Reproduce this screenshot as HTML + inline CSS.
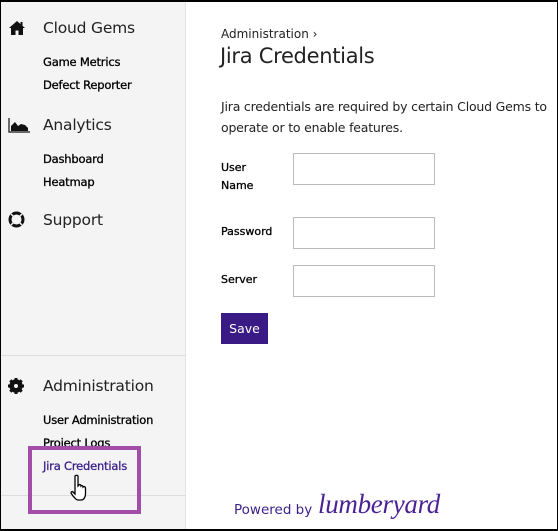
<!DOCTYPE html>
<html><head><style>
*{margin:0;padding:0;box-sizing:border-box}
body{width:558px;height:531px;position:relative;font-family:"DejaVu Sans","Liberation Sans",sans-serif;background:#fff;overflow:hidden}
.frame{position:absolute;left:0;top:0;width:558px;height:531px;border:1px solid #000;border-top-width:2px;border-bottom-width:2px;pointer-events:none;z-index:9}
.side{position:absolute;left:1px;top:0;width:185px;height:531px;background:#f4f4f4;border-right:1px solid #e4e4e4}
.h{position:absolute;left:43px;font-size:15.5px;color:#222;letter-spacing:-0.2px}
.l{position:absolute;left:43px;font-size:11.5px;color:#000;letter-spacing:-0.2px;-webkit-text-stroke:0.3px #000}
.ic{position:absolute;left:8px}
.hr{position:absolute;left:1px;width:185px;height:1px;background:#ddd}
.t{position:absolute;color:#222}
input{position:absolute;left:293px;width:142px;height:32px;border:1px solid #bbb;background:#fff}
.lab{position:absolute;left:221px;font-size:11px;color:#000;line-height:18px;-webkit-text-stroke:0.3px #000}
</style></head><body>
<div class="side"></div>
<svg class="ic" style="top:20px" width="18" height="15" viewBox="0 0 18 15"><path d="M9 1L1 8h2v7h4.5v-4.5h3V15H15V8h2z" fill="#111"/><rect x="12.5" y="2" width="2" height="4" fill="#111"/></svg>
<div class="h" style="top:19px">Cloud Gems</div>
<div class="l" style="top:55px">Game Metrics</div>
<div class="l" style="top:78px">Defect Reporter</div>
<svg class="ic" style="top:117px" width="22" height="16" viewBox="0 0 22 16"><path d="M1 1v14h21" stroke="#111" stroke-width="1.2" fill="none"/><path d="M3 14V9l4-4 3 4 3-2 4 1 3 3v3z" fill="#111"/></svg>
<div class="h" style="top:116px">Analytics</div>
<div class="l" style="top:152px">Dashboard</div>
<div class="l" style="top:175px">Heatmap</div>
<svg class="ic" style="top:211px" width="17" height="17" viewBox="0 0 17 17"><circle cx="8.5" cy="8.5" r="6.5" stroke="#111" stroke-width="3" fill="none"/><path d="M3 3l3 3M14 3l-3 3M3 14l3-3M14 14l-3-3" stroke="#f4f4f4" stroke-width="1.5"/></svg>
<div class="h" style="top:211px">Support</div>
<div class="hr" style="top:355px"></div>
<svg class="ic" style="top:378px" width="16" height="16" viewBox="0 0 16 16"><circle cx="8" cy="8" r="5" fill="none" stroke="#111" stroke-width="3.4"/><g stroke="#111" stroke-width="3"><path d="M8 0v16M0 8h16M2.3 2.3l11.4 11.4M13.7 2.3L2.3 13.7"/></g><circle cx="8" cy="8" r="2" fill="#f4f4f4"/></svg>
<div class="h" style="top:377px">Administration</div>
<div class="l" style="top:413px">User Administration</div>
<div class="l" style="top:436px">Project Logs</div>
<div class="l" style="top:459px;color:#3b1f8a;-webkit-text-stroke:0.3px #3b1f8a">Jira Credentials</div>
<div class="hr" style="top:495px"></div>
<div style="position:absolute;left:28px;top:446px;width:113px;height:68px;border:4px solid #a24ea8"></div>
<svg style="position:absolute;left:70px;top:474px" width="24" height="28" viewBox="0 0 24 28"><path d="M5 2c1-1 2.5-1 3 0v10l1-1c1-1 2 0 2 1 1-1 2 0 2 1 1-1 2.5 0 2.5 1v6c0 3-2 6-4 6H8c-2 0-3-2-5-4l-2-3c0-1 1-2 2-1l2 2z" fill="#fff" stroke="#000" stroke-width="1.3"/></svg>
<div class="t" style="left:221px;top:27px;font-size:12px">Administration &rsaquo;</div>
<div class="t" style="left:220px;top:44px;font-size:21px;letter-spacing:-0.3px">Jira Credentials</div>
<div class="t" style="left:221px;top:96px;font-size:12.5px;line-height:21px;width:335px;letter-spacing:-0.2px">Jira credentials are required by certain Cloud Gems to operate or to enable features.</div>
<div class="lab" style="top:159px">User<br>Name</div>
<input style="top:153px">
<div class="lab" style="top:223px">Password</div>
<input style="top:217px">
<div class="lab" style="top:271px">Server</div>
<input style="top:265px">
<div style="position:absolute;left:221px;top:313px;width:47px;height:31px;background:#3a1a85;color:#fff;font-size:12.5px;line-height:31px;text-align:center">Save</div>
<div style="position:absolute;left:234px;top:502px;font-size:13.5px;color:#3b1f8a">Powered by</div>
<div style="position:absolute;left:318px;top:489px;font-size:27px;color:#4a2296;font-family:'Liberation Serif',serif;font-style:italic;letter-spacing:-0.3px">lumberyard</div>
<div class="frame"></div>
</body></html>
